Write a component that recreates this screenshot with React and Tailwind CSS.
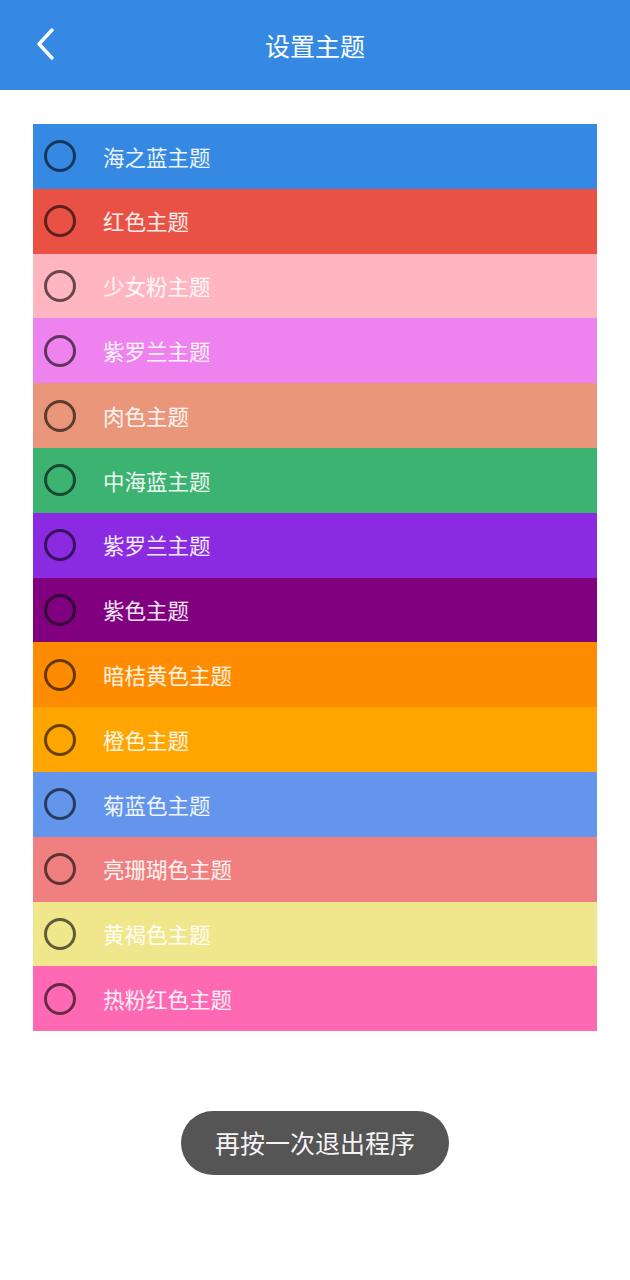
const rows = [
  ["海之蓝主题", "bg-[#3589e3]"],
  ["红色主题", "bg-[#e95144]"],
  ["少女粉主题", "bg-[#ffb6c1]"],
  ["紫罗兰主题", "bg-[#ee82ee]"],
  ["肉色主题", "bg-[#e9967a]"],
  ["中海蓝主题", "bg-[#3cb371]"],
  ["紫罗兰主题", "bg-[#8a2be2]"],
  ["紫色主题", "bg-[#800080]"],
  ["暗桔黄色主题", "bg-[#ff8c00]"],
  ["橙色主题", "bg-[#ffa500]"],
  ["菊蓝色主题", "bg-[#6495ed]"],
  ["亮珊瑚色主题", "bg-[#f08080]"],
  ["黄褐色主题", "bg-[#f0e68c]"],
  ["热粉红色主题", "bg-[#ff69b4]"],
];

export default function App() {
  return (
    <div className="w-[630px] h-[1280px] bg-white flex flex-col" style={{ fontFamily: '"Noto Sans CJK SC", "Noto Sans", sans-serif' }}>
      <div className="h-[90px] bg-[#3589e3] flex items-center relative shrink-0">
        <div className="absolute left-[33px] top-[27px]">
          <svg width="24" height="34" viewBox="0 0 24 34" fill="none">
            <path d="M19 3 L6 17 L19 31" stroke="white" strokeWidth="3.4" strokeLinecap="round" strokeLinejoin="round" />
          </svg>
        </div>
        <div className="w-full text-center text-white text-[25px] leading-none">设置主题</div>
      </div>
      <div className="mt-[34px] mx-[33px] flex flex-col">
        {rows.map(([name, bg], i) => (
          <div key={i} className={`h-[64.8px] ${bg} flex items-center`}>
            <div className="ml-[11px] w-[32px] h-[32px] rounded-full border-[3px] border-black/60 shrink-0" />
            <div className="ml-[27px] text-[21.5px] text-white/90 leading-none">{name}</div>
          </div>
        ))}
      </div>
      <div className="flex justify-center mt-[80px]">
        <div className="w-[268px] h-[64px] rounded-full bg-[#555555] flex items-center justify-center text-[25px] text-white/95">
          再按一次退出程序
        </div>
      </div>
    </div>
  );
}
